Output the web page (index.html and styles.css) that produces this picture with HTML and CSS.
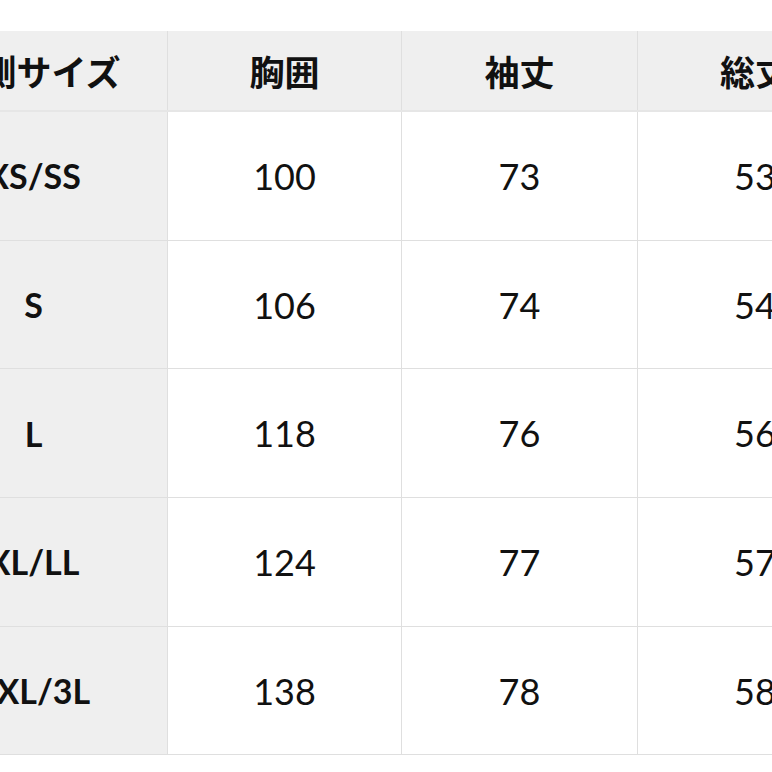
FILE: index.html
```html
<!DOCTYPE html>
<html lang="ja">
<head>
<meta charset="utf-8">
<link rel="stylesheet" href="styles.css">
</head>
<body>
<div class="wrap">
<table class="size-table">
  <colgroup>
    <col class="c1"><col class="c2"><col class="c3"><col class="c4"><col class="c5">
  </colgroup>
  <thead>
    <tr>
      <th class="label">実測サイズ</th>
      <th>胸囲</th>
      <th>袖丈</th>
      <th>総丈</th>
      <th>肩幅</th>
    </tr>
  </thead>
  <tbody>
    <tr><th class="label">XS/SS</th><td>100</td><td>73</td><td>53</td><td>45</td></tr>
    <tr><th class="label">S</th><td>106</td><td>74</td><td>54</td><td>46</td></tr>
    <tr><th class="label">L</th><td>118</td><td>76</td><td>56</td><td>49</td></tr>
    <tr><th class="label">XL/LL</th><td>124</td><td>77</td><td>57</td><td>51</td></tr>
    <tr><th class="label">2XL/3L</th><td>138</td><td>78</td><td>58</td><td>53</td></tr>
  </tbody>
</table>
</div>
</body>
</html>
```

FILE: styles.css
```css
html, body {
  margin: 0;
  padding: 0;
  background: #ffffff;
}
body {
  width: 772px;
  height: 772px;
  overflow: hidden;
  font-family: Lato, "Noto Sans CJK JP", sans-serif;
  color: #111111;
}
.wrap {
  padding-top: 31px;
  margin-left: -101px;
}
.size-table {
  border-collapse: collapse;
  table-layout: fixed;
  width: 1208px;
}
.c1 { width: 268px; }
.c2 { width: 234px; }
.c3 { width: 236px; }
.c4 { width: 235px; }
.c5 { width: 235px; }

.size-table th,
.size-table td {
  border: 1px solid #dfdfdf;
  text-align: center;
  vertical-align: middle;
  padding: 0;
}
.size-table thead th {
  height: 79px;
  background: #efefef;
  font-family: "Noto Sans CJK JP", sans-serif;
  font-weight: 700;
  font-size: 35px;
  border-top: none;
  border-bottom: 2px solid #e6e6e6;
}
.size-table tbody td,
.size-table tbody th {
  height: 127.7px;
}
.size-table tbody td {
  background: #ffffff;
  font-size: 36px;
  font-weight: 400;
}
.size-table tbody th.label {
  background: #efefef;
  font-size: 34px;
  font-weight: 700;
}
```
